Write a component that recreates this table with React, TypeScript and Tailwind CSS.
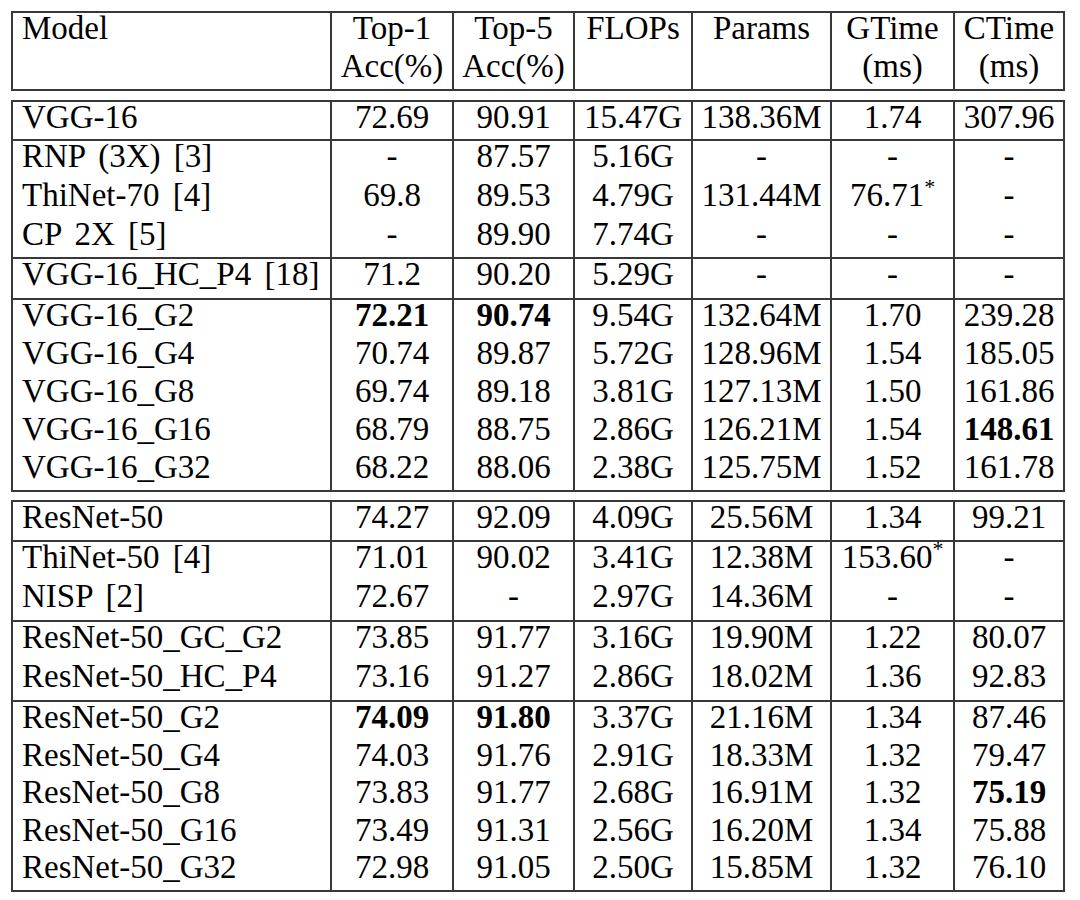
import React from "react";

type Cell = string | { t: string; b?: boolean; sup?: boolean };
type Row = { h: string; c: Cell[] };
type Group = Row[];

const COLS = "grid grid-cols-[317px_122px_121px_118px_139px_123px_110px]";

const vgg: Group[] = [
  [{ h: "h-[37px]", c: ["VGG-16", "72.69", "90.91", "15.47G", "138.36M", "1.74", "307.96"] }],
  [
    { h: "h-[39px]", c: ["RNP (3X) [3]", "-", "87.57", "5.16G", "-", "-", "-"] },
    { h: "h-[39px]", c: ["ThiNet-70 [4]", "69.8", "89.53", "4.79G", "131.44M", { t: "76.71", sup: true }, "-"] },
    { h: "h-[38px]", c: ["CP 2X [5]", "-", "89.90", "7.74G", "-", "-", "-"] },
  ],
  [{ h: "h-[39px]", c: ["VGG-16_HC_P4 [18]", "71.2", "90.20", "5.29G", "-", "-", "-"] }],
  [
    { h: "h-[38px]", c: ["VGG-16_G2", { t: "72.21", b: true }, { t: "90.74", b: true }, "9.54G", "132.64M", "1.70", "239.28"] },
    { h: "h-[38px]", c: ["VGG-16_G4", "70.74", "89.87", "5.72G", "128.96M", "1.54", "185.05"] },
    { h: "h-[38px]", c: ["VGG-16_G8", "69.74", "89.18", "3.81G", "127.13M", "1.50", "161.86"] },
    { h: "h-[38px]", c: ["VGG-16_G16", "68.79", "88.75", "2.86G", "126.21M", "1.54", { t: "148.61", b: true }] },
    { h: "h-[38px]", c: ["VGG-16_G32", "68.22", "88.06", "2.38G", "125.75M", "1.52", "161.78"] },
  ],
];

const resnet: Group[] = [
  [{ h: "h-[38px]", c: ["ResNet-50", "74.27", "92.09", "4.09G", "25.56M", "1.34", "99.21"] }],
  [
    { h: "h-[39px]", c: ["ThiNet-50 [4]", "71.01", "90.02", "3.41G", "12.38M", { t: "153.60", sup: true }, "-"] },
    { h: "h-[39px]", c: ["NISP [2]", "72.67", "-", "2.97G", "14.36M", "-", "-"] },
  ],
  [
    { h: "h-[39px]", c: ["ResNet-50_GC_G2", "73.85", "91.77", "3.16G", "19.90M", "1.22", "80.07"] },
    { h: "h-[39px]", c: ["ResNet-50_HC_P4", "73.16", "91.27", "2.86G", "18.02M", "1.36", "92.83"] },
  ],
  [
    { h: "h-[38px]", c: ["ResNet-50_G2", { t: "74.09", b: true }, { t: "91.80", b: true }, "3.37G", "21.16M", "1.34", "87.46"] },
    { h: "h-[37px]", c: ["ResNet-50_G4", "74.03", "91.76", "2.91G", "18.33M", "1.32", "79.47"] },
    { h: "h-[38px]", c: ["ResNet-50_G8", "73.83", "91.77", "2.68G", "16.91M", "1.32", { t: "75.19", b: true }] },
    { h: "h-[37px]", c: ["ResNet-50_G16", "73.49", "91.31", "2.56G", "16.20M", "1.34", "75.88"] },
    { h: "h-[38px]", c: ["ResNet-50_G32", "72.98", "91.05", "2.50G", "15.85M", "1.32", "76.10"] },
  ],
];

function CellContent({ cell }: { cell: Cell }) {
  if (typeof cell === "string") return <>{cell}</>;
  return (
    <span className={cell.b ? "font-bold" : ""}>
      {cell.t}
      {cell.sup && (
        <span className="relative -top-[12px] text-[22px] leading-none">*</span>
      )}
    </span>
  );
}

function RowView({ row }: { row: Row }) {
  return (
    <div className={`${COLS} ${row.h}`}>
      {row.c.map((cell, i) => (
        <div
          key={i}
          className={
            i === 0
              ? "pl-[9px] leading-[30px] whitespace-nowrap [word-spacing:5px]"
              : "border-l-2 border-[#383838] text-center leading-[30px] whitespace-nowrap"
          }
        >
          <CellContent cell={cell} />
        </div>
      ))}
    </div>
  );
}

function Block({ groups }: { groups: Group[] }) {
  return (
    <div className="border-2 border-[#383838]">
      {groups.map((g, gi) => (
        <div key={gi} className={gi < groups.length - 1 ? "border-b-2 border-[#383838]" : ""}>
          {g.map((r, ri) => (
            <RowView key={ri} row={r} />
          ))}
        </div>
      ))}
    </div>
  );
}

function Header() {
  const cols: [string, string][] = [
    ["Top-1", "Acc(%)"],
    ["Top-5", "Acc(%)"],
    ["FLOPs", ""],
    ["Params", ""],
    ["GTime", "(ms)"],
    ["CTime", "(ms)"],
  ];
  return (
    <div className="border-2 border-[#383838]">
      <div className={`${COLS} h-[76px]`}>
        <div className="pl-[9px] leading-[30px]">Model</div>
        {cols.map(([a, b], i) => (
          <div key={i} className="border-l-2 border-[#383838] text-center flex flex-col">
            <div className="h-[38px] leading-[30px]">{a}</div>
            <div className="h-[38px] leading-[30px]">{b}</div>
          </div>
        ))}
      </div>
    </div>
  );
}

export default function App() {
  return (
    <div className="w-[1080px] h-[900px] bg-white text-black font-['Liberation_Serif',serif] text-[33px] pt-[11px] pl-[11px]">
      <div className="w-[1054px] flex flex-col">
        <Header />
        <div className="h-[9px]" />
        <Block groups={vgg} />
        <div className="h-[8px]" />
        <Block groups={resnet} />
      </div>
    </div>
  );
}
